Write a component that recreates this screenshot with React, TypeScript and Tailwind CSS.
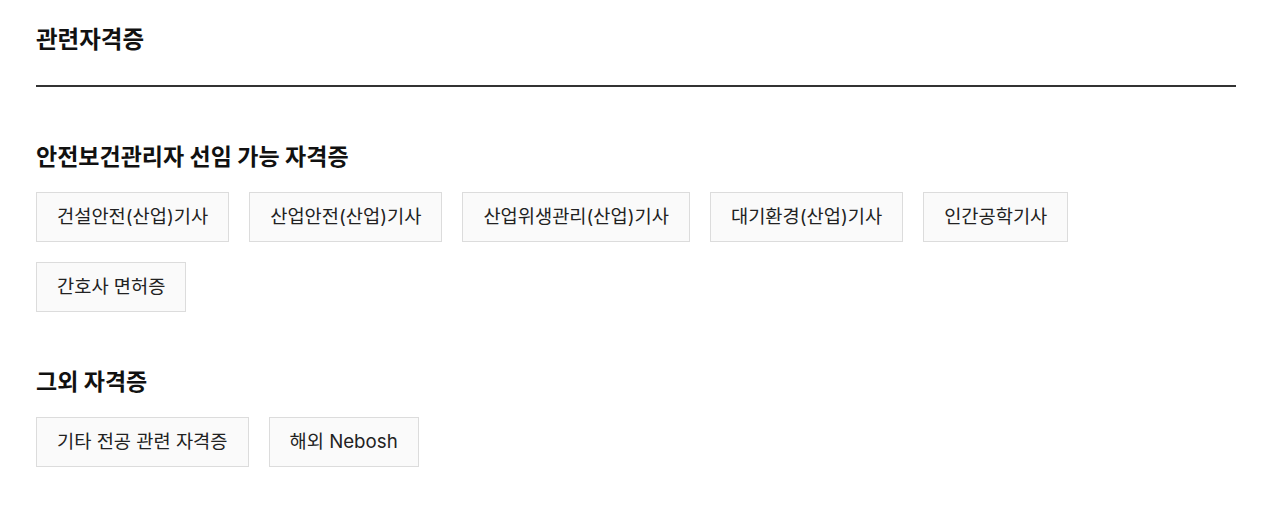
import React from "react";

const groups = [
  {
    title: "안전보건관리자 선임 가능 자격증",
    items: [
      "건설안전(산업)기사",
      "산업안전(산업)기사",
      "산업위생관리(산업)기사",
      "대기환경(산업)기사",
      "인간공학기사",
      "간호사 면허증",
    ],
  },
  {
    title: "그외 자격증",
    items: ["기타 전공 관련 자격증", "해외 Nebosh"],
  },
];

export default function App() {
  return (
    <div
      className="min-h-screen bg-white text-[#111] pl-[36px] pt-[25px]"
      style={{ fontFamily: 'Inter, "Noto Sans CJK KR", sans-serif' }}
    >
      <div className="w-[1200px]">
        <h2 className="text-[23.5px] leading-[30px] font-bold pb-[30px] border-b-2 border-[#333]">
          관련자격증
        </h2>
        {groups.map((g, i) => (
          <section key={i} className="mt-[56px]">
            <h3 className="text-[23px] leading-[28px] font-bold">
              {g.title}
            </h3>
            <div className="mt-[21px] flex flex-wrap gap-x-[20px] gap-y-[20px]">
              {g.items.map((t) => (
                <div
                  key={t}
                  className="h-[50px] px-[20px] flex items-center border border-[#dcdcdc] bg-[#fafafa] text-[18.7px] text-[#222]"
                >
                  {t}
                </div>
              ))}
            </div>
          </section>
        ))}
      </div>
    </div>
  );
}
